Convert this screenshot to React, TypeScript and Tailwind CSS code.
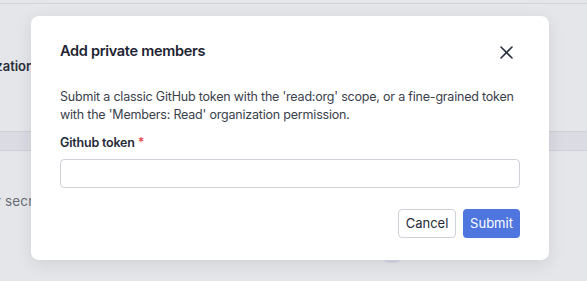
import React from "react";

export default function App() {
  return (
    <div
      className="relative w-[587px] h-[281px] overflow-hidden bg-[#e5e6e9]"
      style={{ fontFamily: "Inter, 'Noto Sans', sans-serif" }}
    >
      {/* Background page (dimmed) */}
      <div className="h-[4px] border-b border-[#d2d3d8]" />
      <div className="h-[127px] flex items-center pb-[2px]">
        <div className="w-[34px] flex justify-end">
          <span className="whitespace-nowrap text-[13px] font-semibold text-[#2a2e3a]">
            Private organization
          </span>
        </div>
      </div>
      <div className="h-[20px] bg-[#dbdbe3] border-y border-[#cfd0d8]" />
      <div className="h-[90px] flex items-center pt-[10px]">
        <div className="w-[46px] flex justify-end">
          <span className="whitespace-nowrap text-[13.5px] tracking-[0.2px] text-[#6a6d78]">
            Enter your secret
          </span>
        </div>
      </div>
      <div className="absolute left-[380px] top-[243px] w-[24px] h-[20px] rounded-full bg-[#d6d5e3]" />

      {/* Modal */}
      <div className="absolute left-[31px] top-[16px] w-[518px] h-[244px] rounded-[8px] bg-white shadow-[0_4px_16px_rgba(30,35,60,0.10)] px-[29px] pt-[25px] pb-[22px] flex flex-col">
        <div className="h-[20px] flex items-center justify-between">
          <h2 className="text-[14.5px] tracking-[-0.3px] leading-[20px] font-semibold text-[#1e2433]">
            Add private members
          </h2>
          <button className="w-[28px] h-[28px] flex items-center justify-center mt-[3px] text-[#2a2f3d]">
            <svg width="13" height="13" viewBox="0 0 13 13" fill="none">
              <path d="M1 1L12 12M12 1L1 12" stroke="currentColor" strokeWidth="1.6" strokeLinecap="round" />
            </svg>
          </button>
        </div>
        <p className="mt-[27px] text-[12.5px] tracking-[-0.2px] leading-[18px] text-[#3a3f4c]">
          Submit a classic GitHub token with the 'read:org' scope, or a fine-grained token with the 'Members: Read' organization permission.
        </p>
        <label className="mt-[10px] text-[12.5px] tracking-[-0.2px] leading-[18px] font-semibold text-[#262b38]">
          Github token <span className="text-[#e5484d]">*</span>
        </label>
        <input
          className="mt-[7px] h-[29px] w-full rounded-[4px] border border-[#cfd1d9] outline-none px-2 text-[13px]"
          type="text"
        />
        <div className="mt-[21px] flex justify-end gap-[7px]">
          <button className="h-[29px] w-[58px] rounded-[4px] border border-[#cfd1d9] bg-white text-[13px] text-[#262b38]">
            Cancel
          </button>
          <button className="h-[29px] w-[57px] rounded-[4px] bg-[#4e76de] text-[13px] text-white">
            Submit
          </button>
        </div>
      </div>
    </div>
  );
}
